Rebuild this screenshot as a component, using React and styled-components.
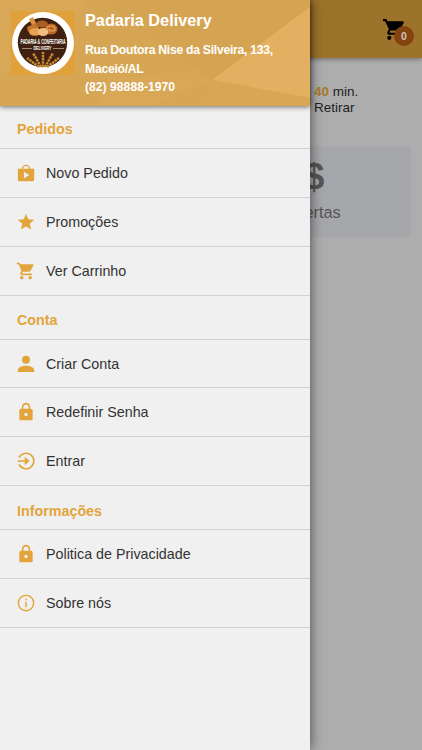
import React from "react"
import styled, { createGlobalStyle } from "styled-components"
import { MdStar, MdShoppingCart, MdLock } from "react-icons/md"

const GlobalStyle = createGlobalStyle`
  * {
    box-sizing: border-box;
  }

  body {
    margin: 0;
    font-family: "Liberation Sans", Arial, sans-serif;
    background-color: #adadad;
  }
`

const StyledApp = styled.div`
  position: relative;
  height: 750px;
  overflow: hidden;
  background-color: #adadad;
`

const StyledTopBar = styled.header`
  display: flex;
  justify-content: flex-end;
  height: 58px;
  padding: 17px 15px 0 0;
  background-color: #9d732b;
  box-shadow: 0 1px 5px rgba(0, 0, 0, 0.4);
`

const StyledCart = styled.div`
  position: relative;
  width: 25px;
  height: 25px;
  color: #000;
`

const StyledBadge = styled.span`
  position: absolute;
  top: 9px;
  left: 12px;
  width: 20px;
  height: 20px;
  border-radius: 50%;
  background-color: #84420e;
  color: #d0c4ba;
  font-size: 10.5px;
  font-weight: bold;
  line-height: 20px;
  text-align: center;
`

const StyledDelivery = styled.div`
  padding: 26px 0 0 314px;
  color: #222;
  font-size: 13.5px;
  line-height: 15.5px;

  p {
    margin: 0;
  }

  b {
    color: #a97a2c;
  }
`

const StyledOffers = styled.section`
  display: flex;
  flex-direction: column;
  align-items: center;
  height: 91px;
  margin: 31px 11px 0 217px;
  background-color: #a5a7aa;
  color: #555;
  font-size: 16.3px;
  line-height: 20px;

  strong {
    margin-top: 11px;
    font-size: 37px;
    line-height: 40px;
  }

  span {
    margin-top: 5px;
  }
`

const StyledDrawer = styled.aside`
  position: absolute;
  top: 0;
  left: 0;
  width: 310px;
  height: 750px;
  background-color: #f0f0f0;
  box-shadow: 0 0 12px rgba(0, 0, 0, 0.6);
`

const StyledDrawerHeader = styled.div`
  position: relative;
  display: flex;
  height: 106px;
  padding: 11px 0 0 11px;
  background-color: #d7a654;
  box-shadow: 0 1px 5px rgba(0, 0, 0, 0.55);
`

const StyledFacets = styled.svg`
  position: absolute;
  top: 0;
  left: 0;
`

const StyledLogo = styled.svg`
  position: relative;
  flex: none;
  overflow: visible;
`

const StyledStoreInfo = styled.div`
  position: relative;
  margin-left: 10px;
  color: #fff;
  font-size: 12.2px;
  font-weight: bold;
  line-height: 18.5px;

  h1 {
    margin: -1px 0 11px;
    font-size: 16.3px;
    line-height: 20px;
  }

  p {
    margin: 0;
    white-space: nowrap;
  }
`

const StyledAddress = styled.p`
  letter-spacing: -0.27px;
`

const StyledSectionTitle = styled.h2`
  height: ${props => props.$first ? "43px" : "44px"};
  margin: 0;
  padding-left: 17px;
  border-bottom: 1px solid #d2d2d2;
  color: #e3a43b;
  font-size: 14.3px;
  line-height: ${props => props.$lineHeight}px;
`

const StyledItem = styled.a`
  display: flex;
  align-items: center;
  height: ${props => props.$height || 49}px;
  padding-left: 16px;
  border-bottom: 1px solid #d2d2d2;
  color: #333;
  font-size: 14.3px;

  svg {
    width: 20px;
    height: 20px;
    margin-right: 10px;
    color: #e3a43b;
  }
`

const ShopIcon = () => (
  <svg viewBox="0 0 24 24" fill="currentColor">
    <path fillRule="evenodd" d="M2.200 7H7a5 5 0 0 1 10 0h4.800v13q0 2-2 2h-15.600q-2 0-2-2zM8.500 7h7a3.500 3.500 0 0 0-7 0zM9.500 10.500v8l6.500-4z" />
  </svg>
)

const UserIcon = () => (
  <svg viewBox="0 0 24 24" fill="currentColor">
    <circle cx="12" cy="7" r="4.800" />
    <path d="M2.200 21.500v-2.400c0-3.300 6-5 9.800-5s9.800 1.700 9.800 5v2.400z" />
  </svg>
)

const EnterIcon = () => (
  <svg viewBox="0 0 24 24" fill="none" stroke="currentColor" strokeWidth="1.900">
    <path d="M3.700 8a9.300 9.300 0 1 1 0 8M2 12h11" />
    <path d="M10.500 7l5.800 5-5.800 5z" fill="currentColor" stroke="none" />
  </svg>
)

const InfoIcon = () => (
  <svg viewBox="0 0 24 24" fill="none" stroke="currentColor" strokeWidth="1.700">
    <circle cx="12" cy="12" r="9.200" />
    <path d="M12 10.500v6.500M12 6.800v2" />
  </svg>
)

const sections = [
  {
    title: "Pedidos",
    lineHeight: 47,
    items: [
      { label: "Novo Pedido", icon: ShopIcon },
      { label: "Promoções", icon: MdStar },
      { label: "Ver Carrinho", icon: MdShoppingCart },
    ],
  },
  {
    title: "Conta",
    lineHeight: 49,
    items: [
      { label: "Criar Conta", icon: UserIcon, height: 48 },
      { label: "Redefinir Senha", icon: MdLock },
      { label: "Entrar", icon: EnterIcon },
    ],
  },
  {
    title: "Informações",
    lineHeight: 50,
    items: [
      { label: "Politica de Privacidade", icon: MdLock },
      { label: "Sobre nós", icon: InfoIcon },
    ],
  },
]

const Logo = () => (
  <StyledLogo width="64" height="64" viewBox="0 0 64 64">
    <rect width="64" height="64" fill="#e0a03a" />
    <circle cx="32" cy="32" r="31" fill="#fff" />
    <circle cx="31.500" cy="31.500" r="24.700" fill="#402010" />
    <path d="M18 8l4-2 6 12-4 3z" fill="#dc9440" />
    <path d="M16 16l9-4 3 4-11 5z" fill="#c4762a" />
    <ellipse cx="24" cy="21" rx="6" ry="3.800" fill="#e9a253" />
    <ellipse cx="40" cy="18" rx="6.500" ry="5.500" fill="#b96725" />
    <path d="M36 18a4 3 0 0 1 8 0 3 2 0 0 1-6 0" fill="none" stroke="#e9a65c" strokeWidth="1.200" />
    <ellipse cx="32" cy="21" rx="5.500" ry="4" fill="#f0bd7e" />
    <ellipse cx="31" cy="13" rx="6" ry="3.500" fill="#a75e24" />
    <g fill="none" stroke="#c88b35" strokeWidth="2.500" strokeDasharray="2.500 0.700">
      <path d="M32 56V41M30 56l-8-14M34 56l8-14M28 56l-12-9M36 56l12-9" />
    </g>
    <path d="M11 37.500h10M42 37.500h11" stroke="#c9b8a4" strokeWidth="0.700" />
    <g fill="#fff" fontWeight="bold" textAnchor="middle">
      <text x="32" y="33.200" fontSize="6.800" textLength="45" lengthAdjust="spacingAndGlyphs">PADARIA & CONFEITARIA</text>
      <text x="31.500" y="39.200" fontSize="6.200" textLength="18" lengthAdjust="spacingAndGlyphs">DELIVERY</text>
    </g>
  </StyledLogo>
)

const App = () => (
  <StyledApp>
    <GlobalStyle />
    <StyledTopBar>
      <StyledCart>
        <MdShoppingCart size={25} />
        <StyledBadge>0</StyledBadge>
      </StyledCart>
    </StyledTopBar>
    <StyledDelivery>
      <p><b>40</b> min.</p>
      <p>Retirar</p>
    </StyledDelivery>
    <StyledOffers>
      <strong>$</strong>
      <span>Ofertas</span>
    </StyledOffers>
    <StyledDrawer>
      <StyledDrawerHeader>
        <StyledFacets width="310" height="106">
          <path d="M0 0h88L72 28 0 75z" fill="#d9a857" />
          <path d="M100 0h210v7l-98 73z" fill="#d5a452" />
          <path d="M310 7v91l-98-18z" fill="#e3b061" />
          <path d="M212 80l98 18v8H205z" fill="#d8a654" />
          <path d="M212 80l-62 26H95l15-30z" fill="#d9a856" />
        </StyledFacets>
        <Logo />
        <StyledStoreInfo>
          <h1>Padaria Delivery</h1>
          <StyledAddress>Rua Doutora Nise da Silveira, 133,</StyledAddress>
          <StyledAddress>Maceió/AL</StyledAddress>
          <p>(82) 98888-1970</p>
        </StyledStoreInfo>
      </StyledDrawerHeader>
      <nav>
        {sections.map((section, index) => (
          <div key={section.title}>
            <StyledSectionTitle $first={index === 0} $lineHeight={section.lineHeight}>
              {section.title}
            </StyledSectionTitle>
            {section.items.map(({ label, icon: Icon, height }) => (
              <StyledItem key={label} $height={height}>
                <Icon />
                {label}
              </StyledItem>
            ))}
          </div>
        ))}
      </nav>
    </StyledDrawer>
  </StyledApp>
)

export default App
